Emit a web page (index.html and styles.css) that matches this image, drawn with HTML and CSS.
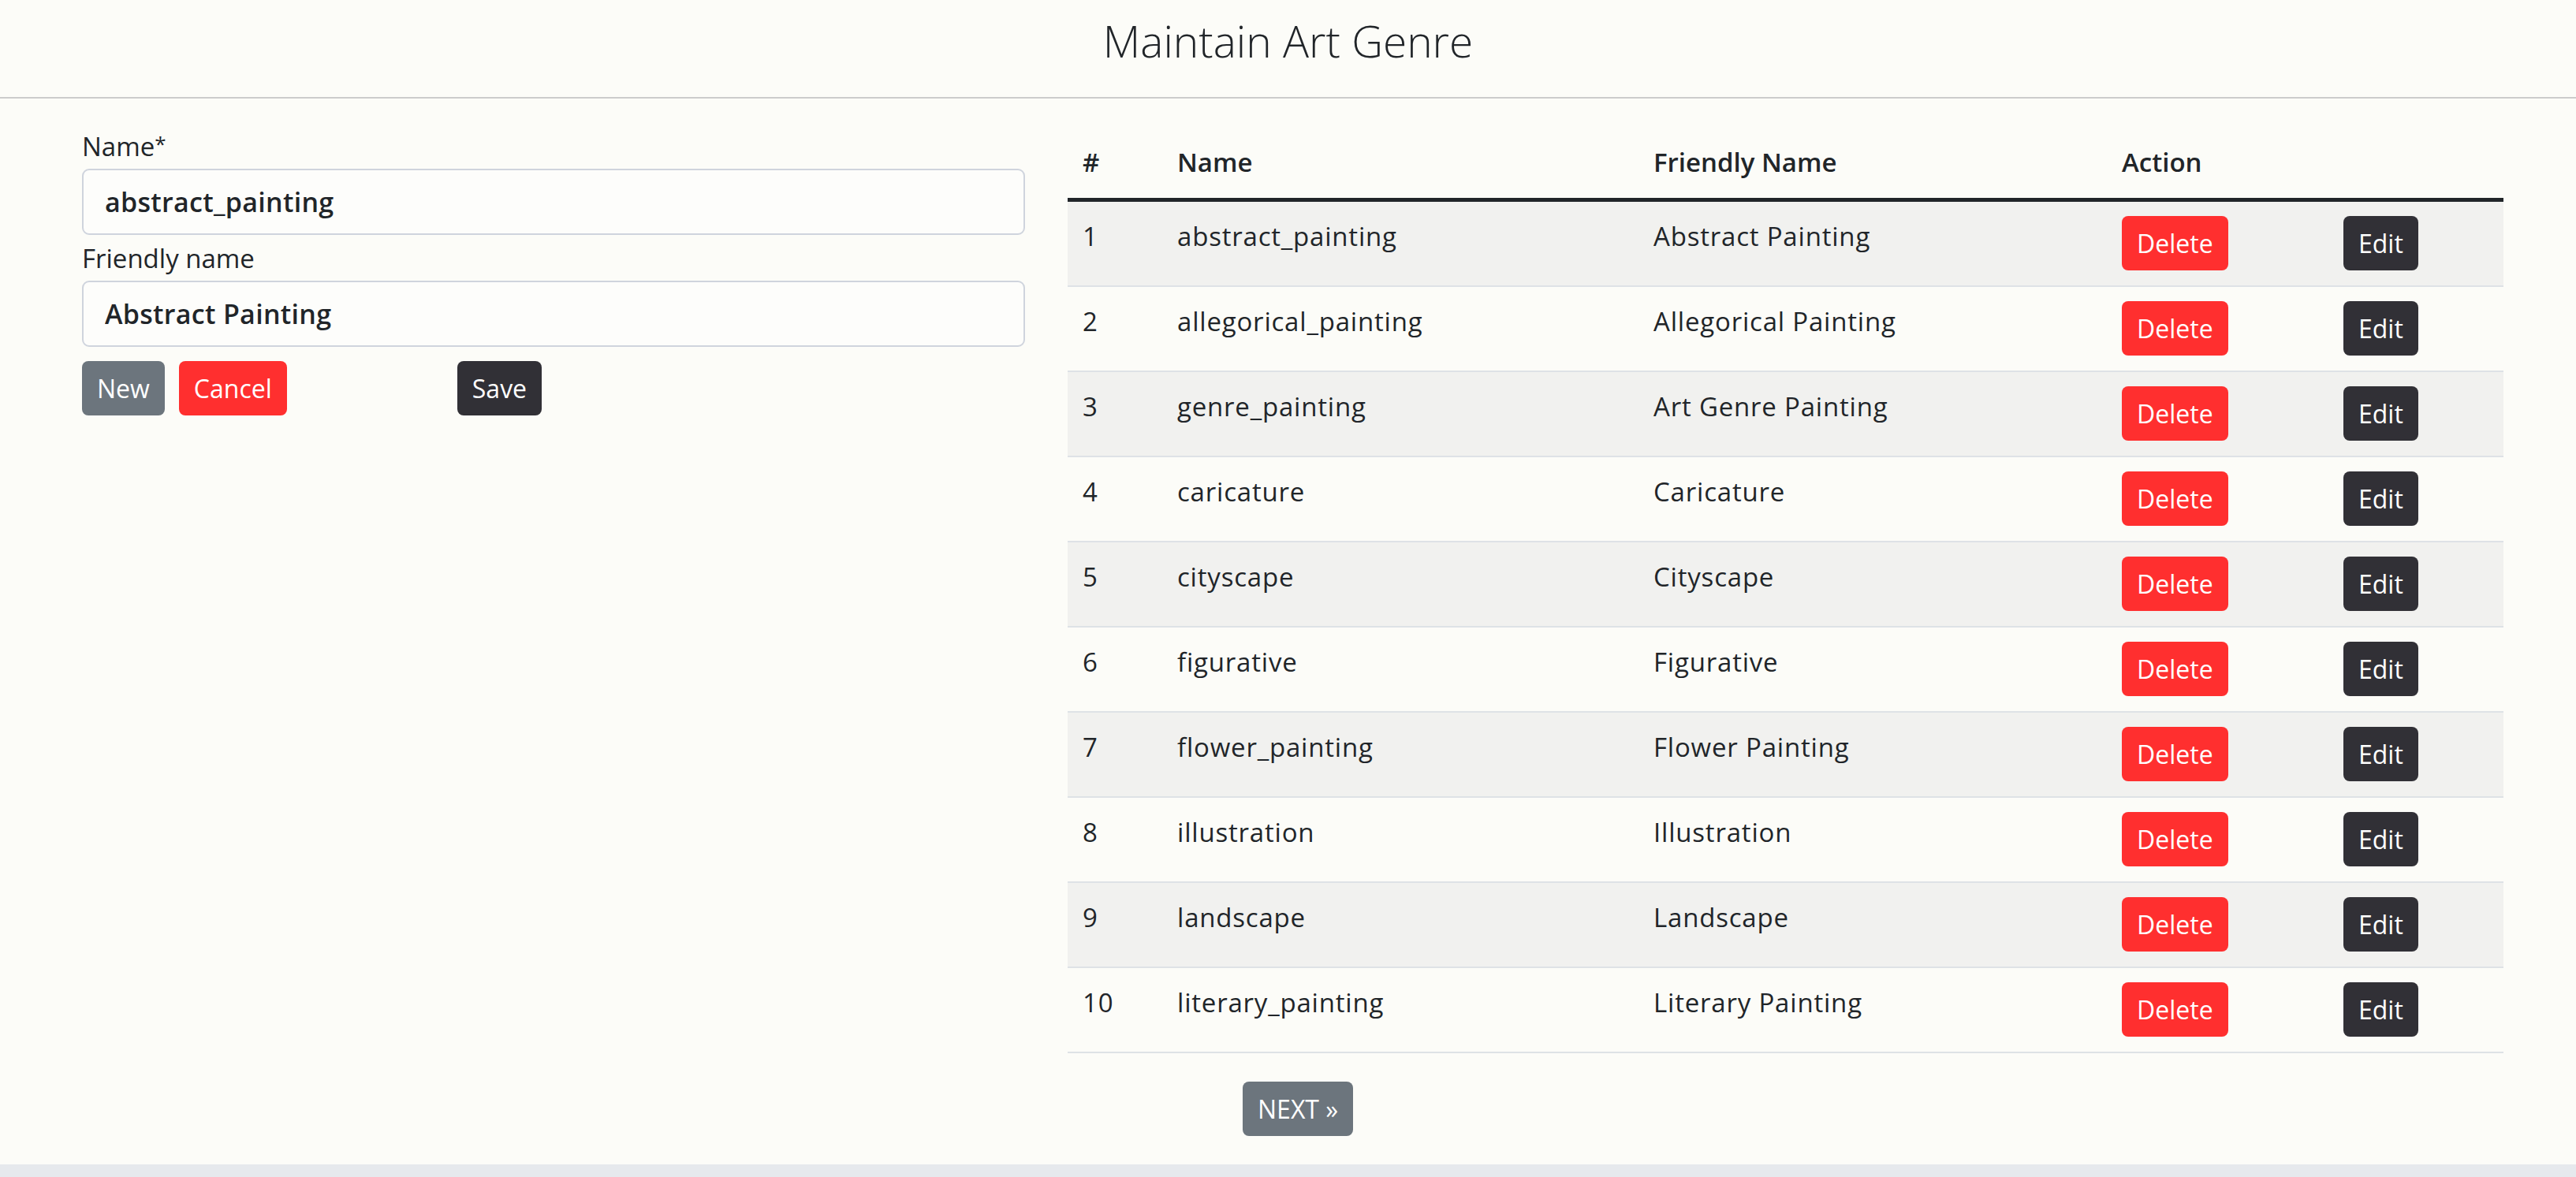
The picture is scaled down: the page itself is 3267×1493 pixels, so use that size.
FILE: index.html
```html
<!DOCTYPE html>
<html lang="en">
<head>
<meta charset="utf-8">
<title>Maintain Art Genre</title>
<link rel="stylesheet" href="styles.css">
</head>
<body>
<div class="page">
  <header class="topbar">
    <h1 class="title">Maintain Art Genre</h1>
  </header>
  <main class="main">
    <section class="form-col">
      <label class="label" for="name">Name<span class="req">*</span></label>
      <input class="input" id="name" type="text" value="abstract_painting">
      <label class="label" for="friendly">Friendly name</label>
      <input class="input" id="friendly" type="text" value="Abstract Painting">
      <div class="form-actions">
        <button class="btn btn-grey">New</button>
        <button class="btn btn-red">Cancel</button>
        <button class="btn btn-dark btn-save">Save</button>
      </div>
    </section>
    <section class="table-col">
      <table class="grid">
        <colgroup>
          <col class="c-num"><col class="c-name"><col class="c-friendly"><col class="c-action"><col class="c-edit">
        </colgroup>
        <thead>
          <tr><th>#</th><th>Name</th><th>Friendly Name</th><th>Action</th><th></th></tr>
        </thead>
        <tbody>
          <tr><td>1</td><td>abstract_painting</td><td>Abstract Painting</td><td><button class="btn btn-red">Delete</button></td><td><button class="btn btn-dark">Edit</button></td></tr>
          <tr><td>2</td><td>allegorical_painting</td><td>Allegorical Painting</td><td><button class="btn btn-red">Delete</button></td><td><button class="btn btn-dark">Edit</button></td></tr>
          <tr><td>3</td><td>genre_painting</td><td>Art Genre Painting</td><td><button class="btn btn-red">Delete</button></td><td><button class="btn btn-dark">Edit</button></td></tr>
          <tr><td>4</td><td>caricature</td><td>Caricature</td><td><button class="btn btn-red">Delete</button></td><td><button class="btn btn-dark">Edit</button></td></tr>
          <tr><td>5</td><td>cityscape</td><td>Cityscape</td><td><button class="btn btn-red">Delete</button></td><td><button class="btn btn-dark">Edit</button></td></tr>
          <tr><td>6</td><td>figurative</td><td>Figurative</td><td><button class="btn btn-red">Delete</button></td><td><button class="btn btn-dark">Edit</button></td></tr>
          <tr><td>7</td><td>flower_painting</td><td>Flower Painting</td><td><button class="btn btn-red">Delete</button></td><td><button class="btn btn-dark">Edit</button></td></tr>
          <tr><td>8</td><td>illustration</td><td>Illustration</td><td><button class="btn btn-red">Delete</button></td><td><button class="btn btn-dark">Edit</button></td></tr>
          <tr><td>9</td><td>landscape</td><td>Landscape</td><td><button class="btn btn-red">Delete</button></td><td><button class="btn btn-dark">Edit</button></td></tr>
          <tr><td>10</td><td>literary_painting</td><td>Literary Painting</td><td><button class="btn btn-red">Delete</button></td><td><button class="btn btn-dark">Edit</button></td></tr>
        </tbody>
      </table>
      <div class="pager">
        <button class="btn btn-grey">NEXT &raquo;</button>
      </div>
    </section>
  </main>
</div>
</body>
</html>
```

FILE: styles.css
```css
* { box-sizing: border-box; }

html, body {
  margin: 0;
  padding: 0;
}

body {
  background: #e6e9ed;
  font-family: "Open Sans", "DejaVu Sans", sans-serif;
  font-size: 33px;
  color: #212529;
}

.page {
  background: #fcfcf8;
  min-height: 1477px;
}

.topbar {
  height: 125px;
  border-bottom: 2px solid #cccccc;
  padding-top: 19px;
}

.title {
  margin: 0;
  text-align: center;
  font-size: 55px;
  line-height: 65px;
  font-weight: 300;
  color: #212529;
}

.main {
  display: grid;
  grid-template-columns: 1196px 1fr;
  column-gap: 54px;
  padding: 31px 92px 0 104px;
}

.form-col {
  display: flex;
  flex-direction: column;
  align-items: flex-start;
  padding-top: 5px;
}

.label {
  display: block;
  line-height: 50px;
  font-weight: 400;
  color: #212529;
  margin-bottom: 3px;
}

.req {
  font-size: 26px;
  vertical-align: 6px;
  line-height: 0;
}

.input {
  display: block;
  width: 100%;
  height: 84px;
  margin-bottom: 5px;
  padding: 0 27px;
  border: 2px solid #cfd4dd;
  border-radius: 9px;
  background: #fdfdfb;
  font-family: inherit;
  font-size: 34px;
  letter-spacing: 0.3px;
  font-weight: 600;
  color: #212529;
}

.form-actions {
  display: flex;
  gap: 18px;
  margin-top: 13px;
}

.btn {
  display: inline-block;
  height: 69px;
  padding: 0 19px;
  border: 0;
  border-radius: 8px;
  font-family: inherit;
  font-size: 32px;
  line-height: 69px;
  font-weight: 400;
  color: #ffffff;
  cursor: pointer;
}

.btn-grey { background: #6c757d; }
.btn-red { background: #ff2f2f; }
.btn-dark { background: #313036; }

.btn-save { margin-left: 198px; }

.grid {
  width: 100%;
  border-collapse: collapse;
}

.c-num { width: 120px; }
.c-name { width: 604px; }
.c-friendly { width: 594px; }
.c-action { width: 281px; }
.c-edit { width: 222px; }

.grid th {
  text-align: left;
  font-weight: 600;
  line-height: 50px;
  padding: 25px 20px 20px 19px;
  border-bottom: 5px solid #212529;
}

.grid td {
  vertical-align: top;
  line-height: 52px;
  padding: 18px 20px 19px 19px;
  border-bottom: 2px solid #dee2e6;
  font-weight: 400;
  letter-spacing: 0.8px;
}

.grid td .btn {
  vertical-align: top;
  letter-spacing: 0;
}

.grid tbody tr:nth-child(odd) td {
  background: #f1f1ef;
}

.pager {
  padding: 36px 0 0 222px;
}
```
